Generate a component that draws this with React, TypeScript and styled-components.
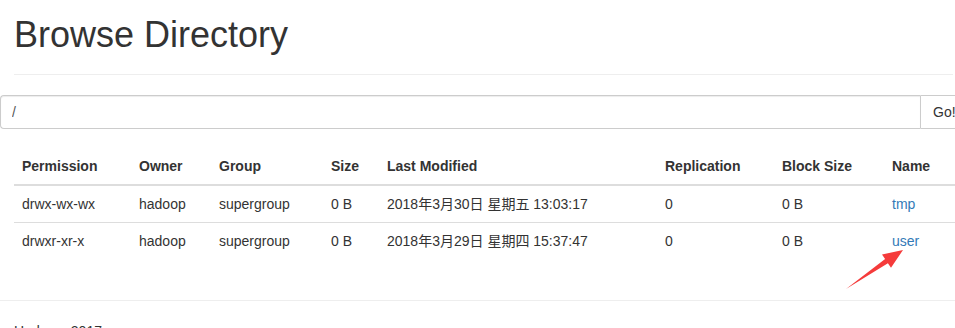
import styled, { createGlobalStyle } from 'styled-components'

const GlobalStyle = createGlobalStyle`
  html, body {
    margin: 0;
    padding: 0;
    background: #fff;
    overflow: hidden;
  }
  body {
    font-family: "Liberation Sans", Arial, "Noto Sans CJK SC", sans-serif;
    font-size: 14px;
    line-height: 20px;
    color: #333;
  }
`

const Page = styled.div`
  position: relative;
  width: 955px;
  height: 328px;
  overflow: hidden;
`

const Container = styled.div`
  padding: 0 2px 0 14px;
`

const PageHeader = styled.div`
  padding-bottom: 9px;
  border-bottom: 1px solid #eee;
`

const Title = styled.h1`
  margin: 15px 0 10px;
  font-size: 36px;
  line-height: 40px;
  font-weight: 500;
  color: #333;
`

const InputGroup = styled.form`
  display: flex;
  margin: 20px 0 0 -14px;
  width: 980px;
  height: 34px;
`

const PathInput = styled.input`
  box-sizing: border-box;
  width: 920px;
  height: 34px;
  padding: 6px 11px;
  border: 1px solid #ccc;
  border-right: 0;
  border-radius: 4px 0 0 4px;
  box-shadow: inset 0 1px 1px rgba(0, 0, 0, 0.075);
  font: inherit;
  color: #555;
  outline: none;
`

const GoButton = styled.button`
  box-sizing: border-box;
  height: 34px;
  padding: 6px 12px;
  border: 1px solid #ccc;
  border-radius: 0 4px 4px 0;
  background: #fff;
  font: inherit;
  color: #333;
`

const Table = styled.table`
  width: 960px;
  margin: 19px 0 20px;
  border-collapse: collapse;
  table-layout: fixed;
`

const Th = styled.th`
  padding: 8px;
  text-align: left;
  font-weight: bold;
  border-bottom: 2px solid #ddd;
  white-space: nowrap;
`

const Td = styled.td`
  padding: 8px;
  border-top: 1px solid #ddd;
  white-space: nowrap;
`

const NameLink = styled.a`
  color: #337ab7;
  text-decoration: none;
`

const FooterRule = styled.hr`
  margin: 41px 0 20px -14px;
  width: 1000px;
  border: 0;
  border-top: 1px solid #eee;
`

const Footer = styled.p`
  margin: 0;
`

const Overlay = styled.svg`
  position: absolute;
  left: 0;
  top: 0;
  pointer-events: none;
`

const columns = [
  { label: 'Permission', width: 117 },
  { label: 'Owner', width: 80 },
  { label: 'Group', width: 112 },
  { label: 'Size', width: 56 },
  { label: 'Last Modified', width: 278 },
  { label: 'Replication', width: 117 },
  { label: 'Block Size', width: 110 },
  { label: 'Name', width: 90 },
]

const files = [
  {
    permission: 'drwx-wx-wx',
    owner: 'hadoop',
    group: 'supergroup',
    size: '0 B',
    modified: '2018年3月30日 星期五 13:03:17',
    replication: '0',
    blockSize: '0 B',
    name: 'tmp',
  },
  {
    permission: 'drwxr-xr-x',
    owner: 'hadoop',
    group: 'supergroup',
    size: '0 B',
    modified: '2018年3月29日 星期四 15:37:47',
    replication: '0',
    blockSize: '0 B',
    name: 'user',
  },
]

export default function App() {
  return (
    <Page>
      <GlobalStyle />
      <Container>
        <PageHeader>
          <Title>Browse Directory</Title>
        </PageHeader>

        <InputGroup onSubmit={(e) => e.preventDefault()}>
          <PathInput defaultValue="/" />
          <GoButton type="submit">Go!</GoButton>
        </InputGroup>

        <Table>
          <colgroup>
            {columns.map((c) => <col key={c.label} style={{ width: c.width }} />)}
          </colgroup>
          <thead>
            <tr>
              {columns.map((c) => <Th key={c.label}>{c.label}</Th>)}
            </tr>
          </thead>
          <tbody>
            {files.map((f) => (
              <tr key={f.name}>
                <Td>{f.permission}</Td>
                <Td>{f.owner}</Td>
                <Td>{f.group}</Td>
                <Td>{f.size}</Td>
                <Td>{f.modified}</Td>
                <Td>{f.replication}</Td>
                <Td>{f.blockSize}</Td>
                <Td><NameLink href="#">{f.name}</NameLink></Td>
              </tr>
            ))}
          </tbody>
        </Table>

        <FooterRule />
        <Footer>Hadoop, 2017.</Footer>
      </Container>

      {/* red annotation arrow pointing at "user" */}
      <Overlay width="955" height="328" viewBox="0 0 955 328">
        <polygon
          points="846,289 887.9,263.3 891,267.8 903,250 882,254.6 885.1,259.1"
          fill="#f53b3b"
        />
      </Overlay>
    </Page>
  )
}
